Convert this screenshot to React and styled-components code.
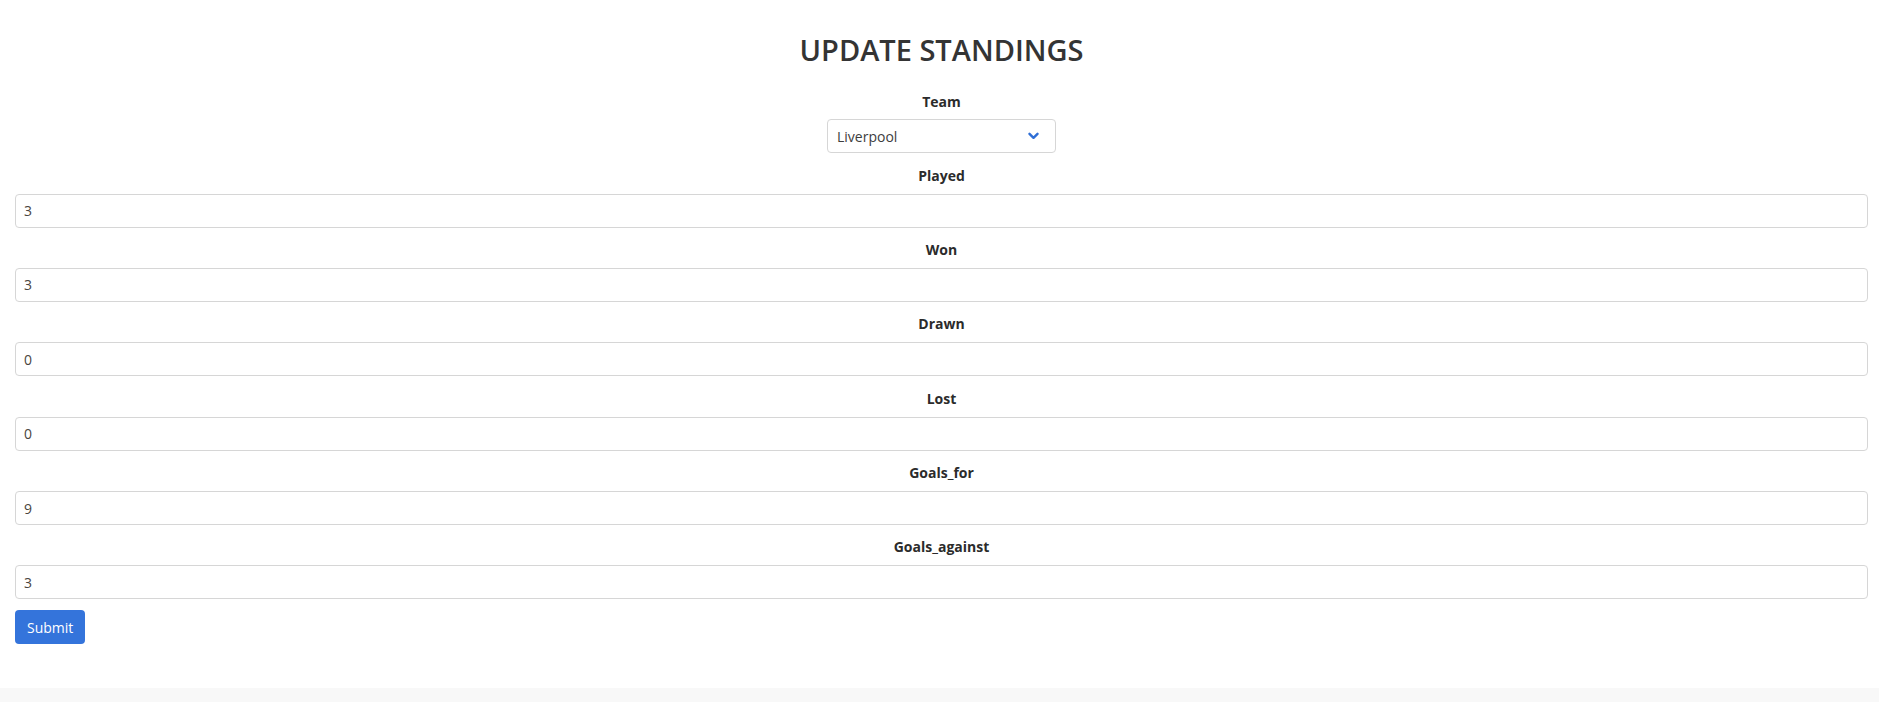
import React from "react";
import styled, { createGlobalStyle } from "styled-components";

const Global = createGlobalStyle`
  html, body { margin: 0; padding: 0; background: #fff; }
  body { font-family: "Open Sans", "Noto Sans", sans-serif; color: #212529; }
  * { box-sizing: border-box; }
`;

const Page = styled.div`
  display: flex;
  flex-direction: column;
  min-height: 702px;
`;

const Main = styled.main`
  padding: 0 11px 44px 15px;
`;

const Title = styled.h1`
  margin: 32px 0 24px;
  font-size: 29px;
  line-height: 36px;
  font-weight: 600;
  text-align: center;
  color: #343434;
`;

const Form = styled.form`
  display: flex;
  flex-direction: column;
`;

const Group = styled.div`
  display: flex;
  flex-direction: column;
  align-items: ${(p) => (p.$center ? "center" : "stretch")};
`;

const Label = styled.label`
  display: block;
  text-align: center;
  font-size: 14px;
  line-height: 20px;
  font-weight: 700;
  color: #2b2b2b;
  margin: ${(p) => (p.$first ? "0 0 7px" : p.$afterSelect ? "12.5px 0 8px" : "12.4px 0 8px")};
`;

const SelectBox = styled.div`
  position: relative;
  width: 229px;
  height: 34px;
  border: 1px solid #d6d6d6;
  border-radius: 4px;
  background: #fff;
  display: flex;
  align-items: center;
  padding: 0 9px;
  font-size: 14px;
  color: #3d3d3d;
`;

const Chevron = styled.svg`
  position: absolute;
  right: 16px;
  top: 50%;
  transform: translateY(-50%);
`;

const Input = styled.input`
  height: 34px;
  width: 100%;
  border: 1px solid #d6d6d6;
  border-radius: 4px;
  padding: 0 8px;
  font-family: inherit;
  font-size: 14px;
  color: #4a4540;
  background: #fff;
  outline: none;
`;

const Submit = styled.button`
  align-self: flex-start;
  margin-top: 11px;
  height: 34px;
  padding: 0 12px;
  border: none;
  border-radius: 4px;
  background: #3474db;
  color: #fff;
  font-family: inherit;
  font-size: 14px;
  cursor: pointer;
`;

const Footer = styled.footer`
  flex: 1;
  background: #f8f8f8;
`;

const fields = [
  ["Played", "3"],
  ["Won", "3"],
  ["Drawn", "0"],
  ["Lost", "0"],
  ["Goals_for", "9"],
  ["Goals_against", "3"],
];

export default function App() {
  return (
    <Page>
      <Global />
      <Main>
        <Title>UPDATE STANDINGS</Title>
        <Form onSubmit={(e) => e.preventDefault()}>
          <Group $center>
            <Label $first>Team</Label>
            <SelectBox>
              Liverpool
              <Chevron width="11" height="8" viewBox="0 0 11 8">
                <path d="M1.5 1.8 L5.5 5.8 L9.5 1.8" fill="none" stroke="#2f6fd6" strokeWidth="2.4" strokeLinecap="round" strokeLinejoin="round" />
              </Chevron>
            </SelectBox>
          </Group>
          {fields.map(([name, val], i) => (
            <Group key={name}>
              <Label $afterSelect={i === 0}>{name}</Label>
              <Input defaultValue={val} />
            </Group>
          ))}
          <Submit type="submit">Submit</Submit>
        </Form>
      </Main>
      <Footer />
    </Page>
  );
}
